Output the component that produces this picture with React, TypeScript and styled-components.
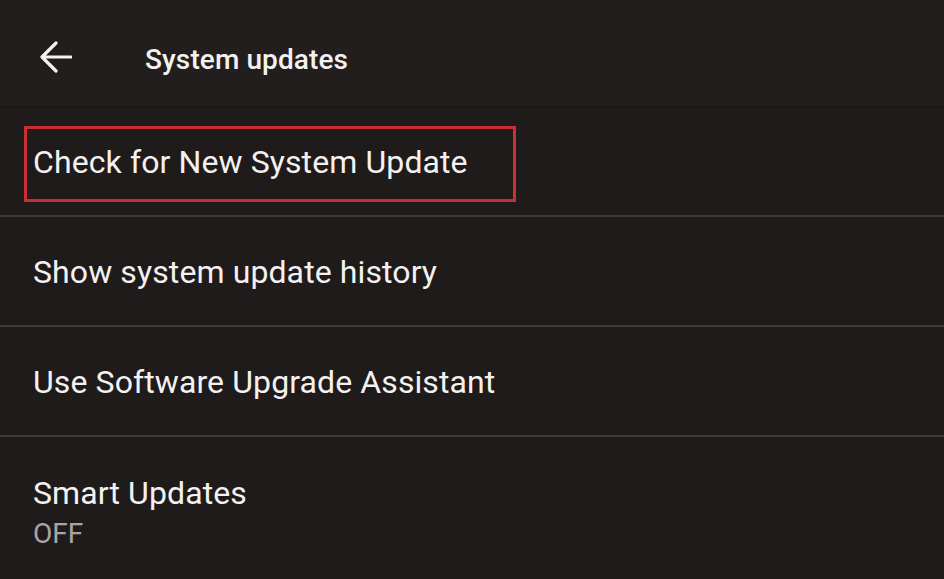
import * as React from "react";
import styled, { createGlobalStyle } from "styled-components";

const GlobalStyle = createGlobalStyle`
  html, body {
    margin: 0;
    padding: 0;
    background: #201b1b;
  }
  body {
    font-family: Roboto, "Liberation Sans", sans-serif;
    -webkit-font-smoothing: antialiased;
  }
`;

const Screen = styled.div`
  width: 944px;
  height: 579px;
  overflow: hidden;
  background: #201b1b;
  display: flex;
  flex-direction: column;
`;

const Header = styled.header`
  height: 107px;
  flex-shrink: 0;
  display: flex;
  align-items: center;
  background: #231e1e;
  border-bottom: 1px solid #1b1717;
  padding-left: 40px;
  padding-top: 12px;
  gap: 73px;
  box-sizing: border-box;
`;

const BackButton = styled.button`
  width: 32px;
  height: 32px;
  padding: 0;
  margin-top: -4px;
  border: none;
  background: transparent;
  color: #f4f1f1;
  display: flex;
  align-items: center;
  justify-content: center;
  cursor: pointer;
`;

const Title = styled.h1`
  margin: 0;
  font-size: 28px;
  font-weight: 500;
  color: #f4f1f1;
  letter-spacing: 0.1px;
`;

const List = styled.ul`
  list-style: none;
  margin: 0;
  padding: 0;
`;

const Row = styled.li<{ $tall?: boolean }>`
  position: relative;
  height: ${(p) => (p.$tall ? "142px" : "110px")};
  padding-left: 33px;
  display: flex;
  flex-direction: column;
  justify-content: ${(p) => (p.$tall ? "flex-start" : "center")};
  padding-top: ${(p) => (p.$tall ? "36px" : "2px")};
  box-sizing: border-box;
  border-bottom: 2px solid #3e3a3a;

  &:last-child {
    border-bottom: none;
  }
`;

const Label = styled.span`
  font-size: 32px;
  color: #f4f1f1;
  line-height: 40px;
  letter-spacing: 0.1px;
`;

const Summary = styled.span`
  font-size: 28px;
  color: #a9a5a5;
  line-height: 36px;
  margin-top: 3px;
`;

const Highlight = styled.span`
  position: absolute;
  left: 24px;
  top: 19px;
  width: 492px;
  height: 76px;
  box-sizing: border-box;
  border: 3px solid #cc2e38;
  pointer-events: none;
`;

const BackArrow = () => (
  <svg width="32" height="32" viewBox="0 0 32 32" fill="none">
    <path
      d="M31 16H3M16 2L2 16l14 14"
      stroke="currentColor"
      strokeWidth="3.2"
      strokeLinecap="round"
      strokeLinejoin="round"
    />
  </svg>
);

const items = [
  { label: "Check for New System Update", highlighted: true },
  { label: "Show system update history" },
  { label: "Use Software Upgrade Assistant" },
  { label: "Smart Updates", summary: "OFF" },
];

export default function App() {
  return (
    <>
      <GlobalStyle />
      <Screen>
        <Header>
          <BackButton aria-label="Back">
            <BackArrow />
          </BackButton>
          <Title>System updates</Title>
        </Header>
        <List>
          {items.map((item) => (
            <Row key={item.label} $tall={!!item.summary}>
              <Label>{item.label}</Label>
              {item.summary && <Summary>{item.summary}</Summary>}
              {item.highlighted && <Highlight />}
            </Row>
          ))}
        </List>
      </Screen>
    </>
  );
}
